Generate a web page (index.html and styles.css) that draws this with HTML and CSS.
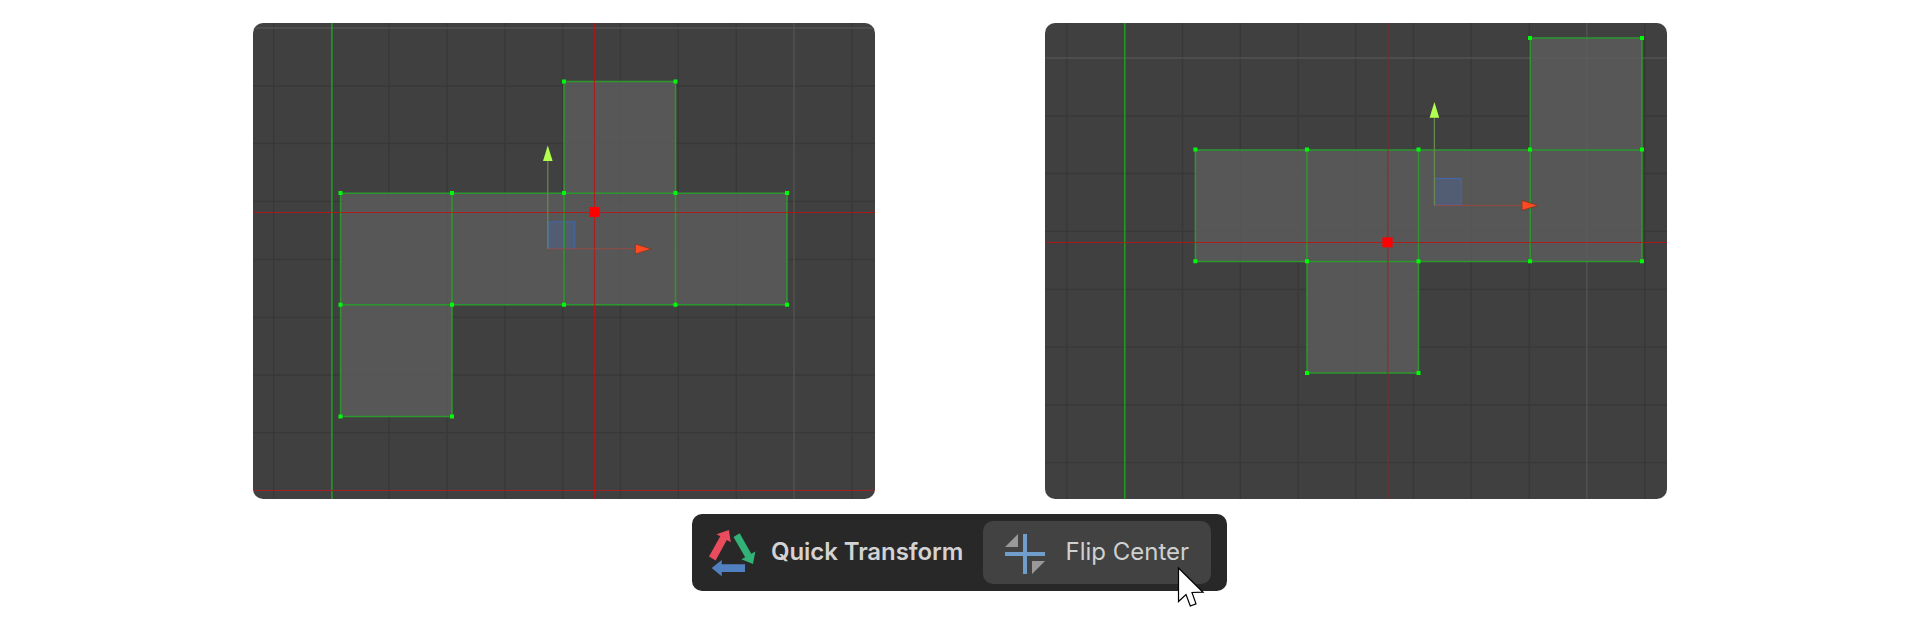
FILE: index.html
```
<!DOCTYPE html>
<html lang="en">
<head>
<meta charset="utf-8">
<title>Quick Transform – Flip Center</title>
<link rel="stylesheet" href="styles.css">
</head>
<body>
<main class="page">
  <div class="viewports">
    <svg class="viewport" viewBox="253 23 622 476">
      <path class="grid" d="M273.7 23V499M389 23V499M447.2 23V499M505 23V499M562.8 23V499M620.4 23V499M678.2 23V499M736.3 23V499M852 23V499M253 86H875M253 143.5H875M253 201.5H875M253 259.5H875M253 317.3H875M253 375H875M253 432.6H875"/>
      <path class="grid-major" d="M794 23V499M253 28H875"/>
      <path class="axis-y" d="M331.9 23V499"/>
      <path class="axis-x" d="M253 490.5H875"/>
      <path class="face" d="M340.6 193H564V81.5H675.5V193H787V304.7H452V416.5H340.6Z"/>
      <path class="edge" d="M340.6 193.3H787V304.7H340.6ZM340.6 304.7V416.5H452V193.3M564 304.7V81.5H675.5V304.7"/>
      <g class="cursor-lines"><path d="M594.5 23V499M253 212.5H875"/><rect x="589.5" y="207" width="10" height="10"/></g>
      <path class="vertex" d="M338.5 191h4v4h-4zM450 191h4v4h-4zM562 191h4v4h-4zM673.5 191h4v4h-4zM785 191h4v4h-4zM562 79.5h4v4h-4zM673.5 79.5h4v4h-4zM338.5 302.8h4v4h-4zM450 302.8h4v4h-4zM562 302.8h4v4h-4zM673.5 302.8h4v4h-4zM785 302.8h4v4h-4zM338.5 414.6h4v4h-4zM450 414.6h4v4h-4z"/>
      <rect class="plane" x="548.5" y="221.8" width="26.3" height="26.7"/>
      <path class="edge" d="M564 221V249"/>
      <path class="shaft-y" d="M547.8 161V249"/><path class="shaft-x" d="M548 248.8H635"/>
      <path class="head-y" d="M547.8 145.5L552.6 161H543Z"/>
      <path class="head-x" d="M651.3 249L635.3 254V244Z"/>
    </svg>
    <svg class="viewport" viewBox="1045 23 622 476">
      <path class="grid" d="M1066.8 23V499M1182.6 23V499M1240.3 23V499M1298 23V499M1355.7 23V499M1413.4 23V499M1471.3 23V499M1529.3 23V499M1644.8 23V499M1045 116H1667M1045 173.5H1667M1045 231.4H1667M1045 289.5H1667M1045 347.1H1667M1045 405H1667M1045 462.6H1667"/>
      <path class="grid-major" d="M1586.8 23V499M1045 58H1667"/>
      <path class="axis-y" d="M1124.8 23V499"/>
      <path class="face" d="M1195.4 149.8H1530.2V38H1642V261.4H1418.5V373H1307V261.4H1195.4Z"/>
      <path class="edge" d="M1195.4 150H1642V261.4H1195.4ZM1307 150V373H1418.5V150M1530.2 261.4V38H1642V150"/>
      <g class="cursor-lines"><path d="M1387.8 23V499M1045 242.5H1667"/><rect x="1382.4" y="237.3" width="10.2" height="10"/></g>
      <path class="vertex" d="M1193.4 147.6h4v4h-4zM1305 147.6h4v4h-4zM1416.5 147.6h4v4h-4zM1528 147.6h4v4h-4zM1640 147.6h4v4h-4zM1528 36h4v4h-4zM1640 36h4v4h-4zM1193.4 259.2h4v4h-4zM1305 259.2h4v4h-4zM1416.5 259.2h4v4h-4zM1528 259.2h4v4h-4zM1640 259.2h4v4h-4zM1305 371h4v4h-4zM1416.5 371h4v4h-4z"/>
      <rect class="plane" x="1435" y="178.5" width="26.3" height="26.5"/>
      <path class="shaft-y" d="M1434.4 117V205.5"/><path class="shaft-x" d="M1435 205.4H1522"/>
      <path class="head-y" d="M1434.4 102L1439.2 117.7H1429.6Z"/>
      <path class="head-x" d="M1538 205.5L1522 210.3V200.4Z"/>
    </svg>
  </div>
  <div class="toolbar">
    <svg class="logo" viewBox="0 0 48 48">
      <path fill="#ea4b5d" d="M20.9 1L22.8 13.3L18.8 11.1L7.6 31.4L1 27.6L12.3 7.3L8.4 5.3Z"/>
      <path fill="#32b276" d="M25.5 8L31.7 4.3L43.2 24.7L47.4 22.6L45 35L33.3 30.3L37.2 28.3Z"/>
      <path fill="#5180c1" d="M3.7 39L13.7 31V35.2H37V43H13.7V47.2Z"/>
    </svg>
    <span class="title">Quick Transform</span>
    <div class="button">
      <svg class="flip" viewBox="0 0 40 40">
        <path fill="#999" d="M13 0V13H0ZM27 27H40L27 40Z"/>
        <path fill="#709dca" d="M18 0h4v40h-4zM0 18h40v4H0z"/>
      </svg>
      <span class="label">Flip Center</span>
    </div>
    <svg class="pointer" viewBox="0 0 30 44">
      <path d="M1.5 2V35.5L9 28.5L13.3 40L19 37.8L15 26.5L26 26.2Z"/>
    </svg>
  </div>
</main>
</body>
</html>
```
FILE: styles.css
```
body { margin: 0; background: #fff; font-family: Inter, "Liberation Sans", sans-serif; }
.page { box-sizing: border-box; height: 640px; padding-top: 23px; display: flex; flex-direction: column; align-items: center; gap: 15px; overflow: hidden; }
.viewports { display: flex; gap: 170px; }
.viewport { display: block; width: 622px; height: 476px; border-radius: 10px; background: #404040; }
.viewport path, .viewport rect { fill: none; }
.viewport .grid { stroke: #383838; stroke-width: 1.3; }
.viewport .grid-major { stroke: #515151; stroke-width: 1.5; }
.viewport .axis-y { stroke: #1f9f22; stroke-width: 1.5; }
.viewport .axis-x { stroke: #a12020; stroke-width: 1; }
.viewport .face { fill: rgba(94, 94, 94, .76); }
.viewport .edge { stroke: #2c972e; stroke-width: 1.5; }
.viewport .cursor-lines path { stroke: rgba(196, 16, 16, .78); stroke-width: 1.1; }
.viewport .cursor-lines rect { fill: #f00; }
.viewport .vertex { fill: #00fa08; }
.viewport .plane { fill: rgba(76, 105, 165, .36); stroke: #4267ad; stroke-width: 1; }
.viewport .shaft-y { stroke: #698852; stroke-width: 1.2; }
.viewport .shaft-x { stroke: #944b40; stroke-width: 1; }
.viewport .head-y { fill: #b2ff4e; }
.viewport .head-x { fill: #ff4a22; stroke: #7c3a25; stroke-width: .8; }
.toolbar { position: relative; box-sizing: border-box; width: 535px; height: 77px; margin-right: 1px; padding: 0 16px; display: flex; align-items: center; border-radius: 10px; background: #282828; }
.logo { width: 48px; height: 48px; margin-top: 1px; flex: none; }
.title { width: 197px; margin: -2px 0 0 15px; flex: none; color: #d4d2d2; font-size: 24px; font-weight: 600; line-height: 30px; letter-spacing: -.08px; white-space: nowrap; }
.button { box-sizing: border-box; width: 228px; height: 63px; margin: -1px 0 0 15px; padding-left: 22px; flex: none; display: flex; align-items: center; border-radius: 10px; background: #424242; }
.flip { width: 40px; height: 40px; margin-top: 3px; flex: none; }
.label { margin: -1px 0 0 20.5px; color: #d0d0d0; font-size: 24px; line-height: 30px; white-space: nowrap; }
.pointer { position: absolute; left: 485px; top: 52px; width: 30px; height: 44px; }
.pointer path { fill: #fff; stroke: #000; stroke-width: 1.2; }
```
